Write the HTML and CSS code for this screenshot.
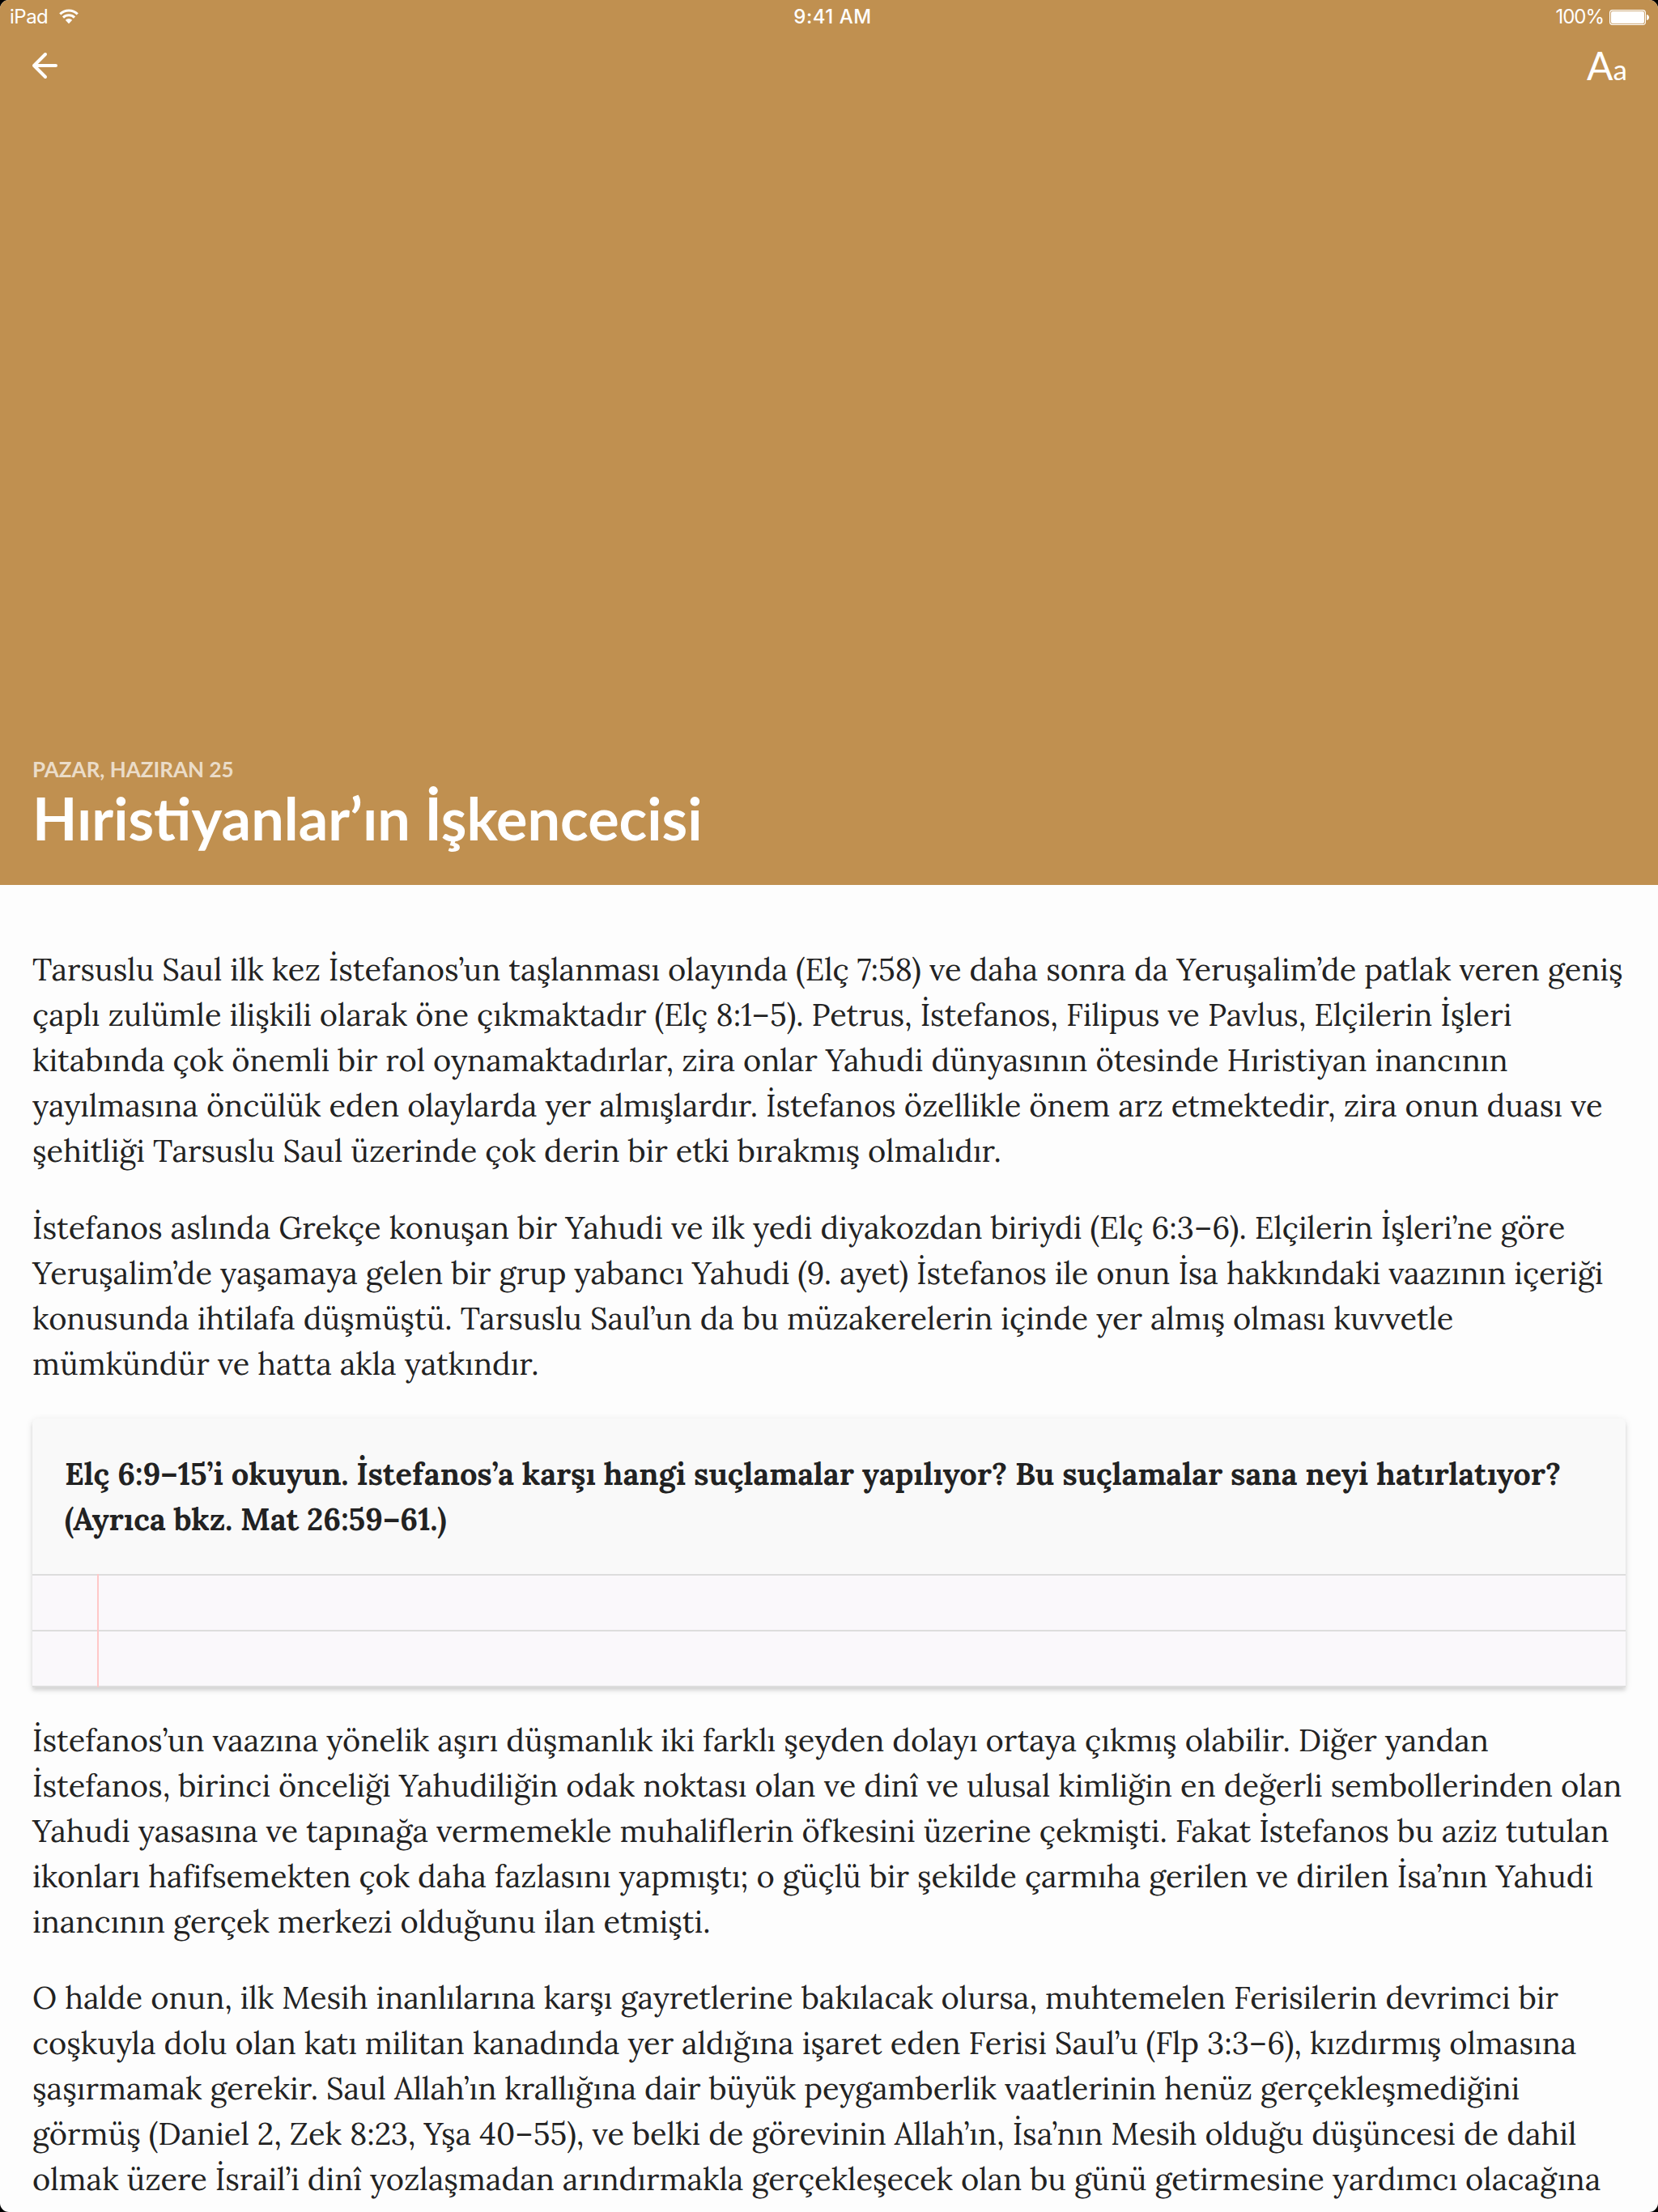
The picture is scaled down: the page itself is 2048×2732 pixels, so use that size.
FILE: index.html
```
<!DOCTYPE html>
<html lang="tr">
<head>
<meta charset="utf-8">
<title>Hıristiyanlar’ın İşkencecisi</title>
<link rel="stylesheet" href="styles.css">
</head>
<body>
<div class="screen">
  <header class="hero">
    <div class="status">
      <div class="carrier"><span>iPad</span>
        <svg class="wifi" width="24" height="19" viewBox="0.500 1 25 19"><g fill="none" stroke="#fff" stroke-width="3.1"><path d="M1.8 7.2a16 16 0 0 1 22.4 0"/><path d="M5.7 11.7a10.4 10.4 0 0 1 14.6 0"/></g><path fill="#fff" d="M8.6 14.9a6.4 6.4 0 0 1 8.8 0L13 19.500z"/></svg>
      </div>
      <div class="clock">9:41 AM</div>
      <div class="power"><span>100%</span>
        <svg width="49" height="19" viewBox="0 0 49 19"><rect x=".6" y=".6" width="43.8" height="17.8" rx="3.2" fill="none" stroke="#fff" stroke-width="1.2"/><rect x="2" y="2" width="41" height="15" rx="2" fill="#fff"/><path fill="#fff" d="M46 6q3 .8 3 3.5T46 13z"/></svg>
      </div>
    </div>
    <nav class="toolbar">
      <svg class="back" width="32" height="34" viewBox="0 0 32 34" fill="none" stroke="#fff" stroke-width="4" stroke-linecap="round" stroke-linejoin="round"><path d="M17 3 3 17l14 14M3 17H30"/></svg>
      <div class="type-size">A<small>a</small></div>
    </nav>
    <div class="heading">
      <div class="date">PAZAR, HAZIRAN 25</div>
      <h1 lang="en">Hıristiyanlar’ın İşkencecisi</h1>
    </div>
  </header>
  <main class="article">
    <p>
      <span class="line">Tarsuslu Saul ilk kez İstefanos’un taşlanması olayında (Elç 7:58) ve daha sonra da Yeruşalim’de patlak veren geniş</span>
      <span class="line">çaplı zulümle ilişkili olarak öne çıkmaktadır (Elç 8:1–5). Petrus, İstefanos, Filipus ve Pavlus, Elçilerin İşleri</span>
      <span class="line">kitabında çok önemli bir rol oynamaktadırlar, zira onlar Yahudi dünyasının ötesinde Hıristiyan inancının</span>
      <span class="line">yayılmasına öncülük eden olaylarda yer almışlardır. İstefanos özellikle önem arz etmektedir, zira onun duası ve</span>
      <span class="line">şehitliği Tarsuslu Saul üzerinde çok derin bir etki bırakmış olmalıdır.</span>
    </p>
    <p>
      <span class="line">İstefanos aslında Grekçe konuşan bir Yahudi ve ilk yedi diyakozdan biriydi (Elç 6:3–6). Elçilerin İşleri’ne göre</span>
      <span class="line">Yeruşalim’de yaşamaya gelen bir grup yabancı Yahudi (9. ayet) İstefanos ile onun İsa hakkındaki vaazının içeriği</span>
      <span class="line">konusunda ihtilafa düşmüştü. Tarsuslu Saul’un da bu müzakerelerin içinde yer almış olması kuvvetle</span>
      <span class="line">mümkündür ve hatta akla yatkındır.</span>
    </p>
    <section class="question">
      <div class="prompt">
        <span class="line">Elç 6:9–15’i okuyun. İstefanos’a karşı hangi suçlamalar yapılıyor? Bu suçlamalar sana neyi hatırlatıyor?</span>
        <span class="line">(Ayrıca bkz. Mat 26:59–61.)</span>
      </div>
      <div class="notes"><div class="rule"></div><div class="rule"></div></div>
    </section>
    <p>
      <span class="line">İstefanos’un vaazına yönelik aşırı düşmanlık iki farklı şeyden dolayı ortaya çıkmış olabilir. Diğer yandan</span>
      <span class="line">İstefanos, birinci önceliği Yahudiliğin odak noktası olan ve dinî ve ulusal kimliğin en değerli sembollerinden olan</span>
      <span class="line">Yahudi yasasına ve tapınağa vermemekle muhaliflerin öfkesini üzerine çekmişti. Fakat İstefanos bu aziz tutulan</span>
      <span class="line">ikonları hafifsemekten çok daha fazlasını yapmıştı; o güçlü bir şekilde çarmıha gerilen ve dirilen İsa’nın Yahudi</span>
      <span class="line">inancının gerçek merkezi olduğunu ilan etmişti.</span>
    </p>
    <p>
      <span class="line">O halde onun, ilk Mesih inanlılarına karşı gayretlerine bakılacak olursa, muhtemelen Ferisilerin devrimci bir</span>
      <span class="line">coşkuyla dolu olan katı militan kanadında yer aldığına işaret eden Ferisi Saul’u (Flp 3:3–6), kızdırmış olmasına</span>
      <span class="line">şaşırmamak gerekir. Saul Allah’ın krallığına dair büyük peygamberlik vaatlerinin henüz gerçekleşmediğini</span>
      <span class="line">görmüş (Daniel 2, Zek 8:23, Yşa 40–55), ve belki de görevinin Allah’ın, İsa’nın Mesih olduğu düşüncesi de dahil</span>
      <span class="line">olmak üzere İsrail’i dinî yozlaşmadan arındırmakla gerçekleşecek olan bu günü getirmesine yardımcı olacağına</span>
    </p>
  </main>
</div>
</body>
</html>
```
FILE: styles.css
```
* { box-sizing: border-box; }
html, body { margin: 0; background: #000; }
.screen {
  width: 2048px;
  height: 2732px;
  overflow: hidden;
  border-radius: 11px;
  background: #fdfdfd;
}
.hero {
  height: 1093px;
  display: flex;
  flex-direction: column;
  background: #c09050;
  color: #fff;
}
.status {
  height: 40px;
  padding: 1px 11px 0 12px;
  display: grid;
  grid-template-columns: 1fr auto 1fr;
  align-items: center;
  font: 24px/40px Inter, sans-serif;
}
.carrier, .power { display: flex; align-items: center; }
.carrier { gap: 14px; letter-spacing: -.5px; }
.carrier svg { margin-top: -2px; }
.power { justify-content: flex-end; gap: 7px; letter-spacing: -1px; }
.clock { font-weight: 500; padding-left: 8px; letter-spacing: .5px; }
.toolbar {
  height: 84px;
  padding: 0 38px 0 39px;
  display: flex;
  justify-content: space-between;
  align-items: center;
}
.back { margin-bottom: 2px; }
.type-size { margin-top: 1px; font: 48px/50px Lato, sans-serif; }
.type-size small { font-size: 35px; }
.heading { margin-top: auto; padding: 0 40px 38px; font-family: Lato, sans-serif; }
.date { margin-bottom: -1px; font-size: 26px; line-height: 32px; font-weight: 700; color: rgba(255, 255, 255, .7); }
h1 { margin: 0; font-size: 72px; line-height: 90px; font-weight: 700; }
.article {
  padding: 76px 40px 0;
  color: #222;
  font: 38px/56px Lora, "Liberation Serif", serif;
  font-variant-ligatures: no-contextual;
}
.line { display: block; white-space: nowrap; }
p { margin: 0 0 39px; }
.question {
  margin: 40px 0 37px;
  border-radius: 6px 6px 0 0;
  background: #f9f9f9;
  box-shadow: 0 4px 4px rgba(0, 0, 0, .1), 0 2px 10px rgba(0, 0, 0, .1);
}
.question + p { margin-bottom: 38px; }
.prompt { height: 192px; padding: 40px; font-weight: 700; letter-spacing: -.03px; }
.notes {
  position: relative;
  border-top: 2px solid #ddd;
  background: #faf8fb;
}
.notes::after {
  content: "";
  position: absolute;
  top: -2px;
  bottom: 0;
  left: 80px;
  width: 2px;
  background: #ffc8c8;
}
.rule { height: 69px; border-bottom: 2px solid #ddd; }
```
